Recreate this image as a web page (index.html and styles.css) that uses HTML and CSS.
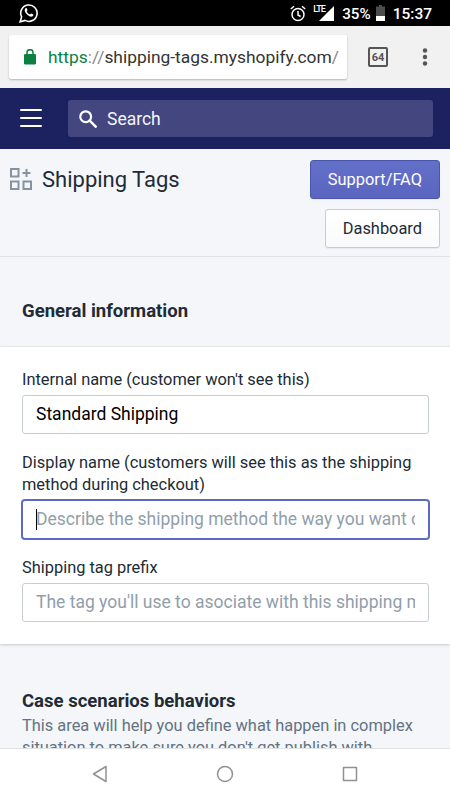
FILE: index.html
```html
<!DOCTYPE html>
<html lang="en">
    <head>
        <meta charset="utf-8">
        <title>Shipping Tags</title>
        <link rel="stylesheet" href="styles.css">
    </head>
    <body>
        <div class="status">
            <svg class="whatsapp" width="20" height="20" viewBox="0 0 20 20" fill="none" stroke="#fff">
                <path d="M1.2 18.8l1.4-4.9A8.2 8.2 0 1 1 6 17.4z" stroke-width="1.6"/>
                <path d="M6.4 5.5c.5-.6 1.2-.6 1.4 0l.7 1.6c.1.5-.6 1-.8 1.3.8 1.5 1.9 2.5 3.5 3.1.4-.3.8-1.1 1.3-.9l1.7.9c.5.5-.3 1.8-1.2 2.1-2.3.6-6.8-2.8-7.3-6.1 0-.8.3-1.6.7-2z" fill="#fff" stroke="none"/>
            </svg>
            <svg class="alarm" width="16" height="17" viewBox="0 0 16 17" fill="none" stroke="#fff" stroke-width="1.5">
                <circle cx="8" cy="9.5" r="6"/>
                <path d="M8 6v4l2.6 1.5M.8 4L4 1.3M15.2 4L12 1.3"/>
            </svg>
            <span class="lte">LTE</span>
            <svg class="signal" width="15" height="15" viewBox="0 0 15 15"><path d="M15 0v15H0z" fill="#fff"/></svg>
            <span class="percent">35%</span>
            <svg class="battery" width="9" height="16" viewBox="0 0 9 16">
                <path d="M3 0h3v1.5h3V11H0V1.5h3z" fill="#4d4d4d"/>
                <path d="M0 11h9v5H0z" fill="#fff"/>
            </svg>
            <span class="clock">15:37</span>
        </div>

        <div class="browser">
            <div class="url">
                <svg width="12" height="16" viewBox="0 0 12 16">
                    <rect y="5" width="12" height="10.5" rx="1.3" fill="#0b8043"/>
                    <path d="M3 6V3.7a3 3 0 0 1 6 0V6" fill="none" stroke="#0b8043" stroke-width="1.5"/>
                </svg>
                <span><span class="scheme">https</span><span class="dim">://</span>shipping-tags.myshopify.com<span class="dim">/</span></span>
            </div>
            <div class="tabs">64</div>
            <svg class="dots" width="6" height="18" viewBox="0 0 6 18" fill="#555">
                <circle cx="3" cy="2.5" r="2.2"/><circle cx="3" cy="9" r="2.2"/><circle cx="3" cy="15.5" r="2.2"/>
            </svg>
        </div>

        <div class="topbar">
            <svg width="22" height="18" viewBox="0 0 22 18" stroke="#fff" stroke-width="2" stroke-linecap="round">
                <path d="M1 1h20M1 9h20M1 17h20"/>
            </svg>
            <div class="search">
                <svg width="18" height="18" viewBox="0 0 18 18" fill="none" stroke="#fff">
                    <circle cx="6.7" cy="6.7" r="5.4" stroke-width="2.2"/>
                    <path d="M10.7 10.7l6 6" stroke-width="2.5" stroke-linecap="round"/>
                </svg>
                <span>Search</span>
            </div>
        </div>

        <div class="header">
            <svg width="22" height="22" viewBox="0 0 22 22" fill="none" stroke="#8593a0" stroke-width="2">
                <path d="M1 1h7.5v7.5H1zM1 13.5h7.5V21H1zM13.5 13.5H21V21h-7.5zM16.5 1v8M12.5 5h8"/>
            </svg>
            <h1>Shipping Tags</h1>
            <div class="actions">
                <a class="button primary">Support/FAQ</a>
                <a class="button">Dashboard</a>
            </div>
        </div>

        <div class="content">
            <h2 class="general">General information</h2>
            <div class="card">
                <label for="internal">Internal name (customer won't see this)</label>
                <input id="internal" type="text" value="Standard Shipping">

                <label for="display">Display name (customers will see this as the shipping method during checkout)</label>
                <div class="focused">
                    <input id="display" type="text" placeholder="Describe the shipping method the way you want customers to see it">
                    <i class="caret"></i>
                </div>

                <label for="prefix">Shipping tag prefix</label>
                <input id="prefix" type="text" placeholder="The tag you'll use to asociate with this shipping method">
            </div>
            <h2 class="case">Case scenarios behaviors</h2>
            <p>This area will help you define what happen in complex situation to make sure you don't get publish with</p>
        </div>

        <div class="navbar">
            <svg width="16" height="18" viewBox="0 0 16 18"><path d="M14 1.5v15L1.5 9z"/></svg>
            <svg width="18" height="18" viewBox="0 0 18 18"><circle cx="9" cy="9" r="7.5"/></svg>
            <svg width="16" height="16" viewBox="0 0 16 16"><rect x="1.5" y="1.5" width="13" height="13"/></svg>
        </div>
    </body>
</html>
```
FILE: styles.css
```css
* {
    box-sizing: border-box;
}

body {
    background: #f4f6fa;
    color: #212b36;
    display: flex;
    flex-direction: column;
    font-family: Roboto, sans-serif;
    font-size: 16.4px;
    height: 800px;
    margin: 0;
    overflow: hidden;
    width: 450px;
}

svg {
    display: block;
    flex: none;
}

.status {
    align-items: center;
    background: #000;
    color: #fff;
    display: flex;
    flex: none;
    height: 26px;
    padding: 0 18px 0 19px;
}

.alarm {
    margin-left: auto;
}

.lte {
    align-self: flex-start;
    font-size: 9px;
    font-weight: 500;
    letter-spacing: -.8px;
    line-height: 9px;
    margin: 5px -10px 0 7px;
    width: 16px;
}

.signal {
    margin-top: 1px;
}

.percent {
    font-size: 15.2px;
    font-weight: 500;
    margin: 1px 5px 0 8px;
}

.clock {
    font-size: 15.5px;
    font-weight: 500;
    margin: 1px 0 0 8px;
}

.browser {
    align-items: center;
    background: #f1f1f1;
    display: flex;
    flex: none;
    height: 62px;
    padding: 0 22px 0 9px;
}

.url {
    align-items: center;
    background: #fff;
    border-radius: 2px;
    box-shadow: 0 1px 2px rgba(0, 0, 0, .25);
    color: #333;
    display: flex;
    font-size: 17.4px;
    gap: 12px;
    height: 44px;
    padding: 0 0 1px 15px;
    white-space: nowrap;
    width: 338px;
}

.scheme {
    color: #0b8043;
}

.dim {
    color: #888;
}

.tabs {
    border: 2px solid #555;
    border-radius: 2px;
    color: #555;
    font-size: 11px;
    font-weight: 700;
    height: 20px;
    line-height: 17px;
    margin-left: 21px;
    text-align: center;
    width: 20px;
}

.dots {
    margin-left: auto;
}

.topbar {
    align-items: center;
    background: #1c2260;
    display: flex;
    flex: none;
    gap: 26px;
    height: 61px;
    padding: 0 17px 1px 20px;
}

.search {
    align-items: center;
    background: #43467f;
    border-radius: 3px;
    color: #f4f5fa;
    display: flex;
    flex: 1;
    font-size: 17.5px;
    gap: 10px;
    height: 37px;
    padding: 1px 0 0 11px;
}

.header {
    align-items: flex-start;
    border-bottom: 1px solid #dfe3e8;
    display: flex;
    flex: none;
    height: 108px;
    padding: 11px 10px 0;
}

.header svg {
    margin-top: 8px;
}

h1 {
    font-size: 22px;
    font-weight: 400;
    line-height: 28px;
    margin: 6px 0 0 10px;
}

.actions {
    align-items: flex-end;
    display: flex;
    flex-direction: column;
    gap: 10px;
    margin-left: auto;
}

.button {
    background: linear-gradient(#fff, #f9fafb);
    border: 1px solid #c4cdd5;
    border-radius: 3px;
    box-shadow: 0 1px 0 rgba(22, 29, 37, .05);
    height: 39px;
    line-height: 38px;
    padding: 0 17px;
}

.primary {
    background: linear-gradient(#6370c8, #5a65c0);
    border-color: #4a55ad;
    color: #fff;
}

.content {
    flex: 1;
    min-height: 0;
    overflow: hidden;
}

h2 {
    font-size: 18.55px;
    font-weight: 700;
    line-height: 24px;
    margin: 0 22px;
}

.general {
    padding: 42px 0 24px;
}

.card {
    background: #fff;
    box-shadow: 0 0 0 1px rgba(63, 63, 68, .05), 0 1px 3px rgba(63, 63, 68, .2);
    height: 297px;
    padding: 22px 21px 0 22px;
}

label {
    display: block;
    line-height: 22px;
    margin-bottom: 4px;
    margin-right: -5px;
}

input {
    background: #fff;
    border: 1px solid #c8cdd3;
    border-radius: 3px;
    color: #000;
    display: block;
    font-family: inherit;
    font-size: 17.5px;
    height: 39px;
    margin: 0 0 18px;
    padding: 0 13px 1px;
    width: 100%;
}

input::placeholder {
    color: #919eab;
    opacity: 1;
}

.focused {
    position: relative;
}

.focused input {
    border-color: #5c6ac4;
    box-shadow: 0 0 0 1px #5c6ac4;
}

.caret {
    background: #000;
    height: 21px;
    left: 14px;
    position: absolute;
    top: 9px;
    width: 1px;
}

.case {
    padding-top: 45px;
}

p {
    color: #637381;
    line-height: 22px;
    margin: 2px 22px 0;
}

.navbar {
    align-items: center;
    background: #fff;
    border-top: 1px solid #e2e2e2;
    display: flex;
    flex: none;
    gap: 108px;
    height: 52px;
    padding: 0 0 1px 92px;
}

.navbar svg {
    fill: none;
    stroke: #919191;
    stroke-linejoin: round;
    stroke-width: 1.5;
}
```
